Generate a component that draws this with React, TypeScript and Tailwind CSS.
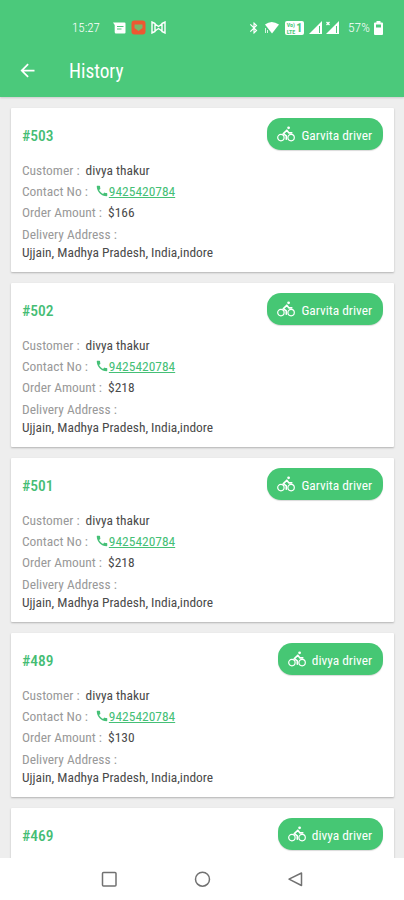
import React from 'react';
import { MdArrowBack, MdBluetooth, MdCall } from 'react-icons/md';

interface Details {
  customer: string;
  phone: string;
  amount: string;
  address: string;
}

interface Order {
  id: number;
  driver: string;
  details?: Details;
}

const base = {
  customer: 'divya thakur',
  phone: '9425420784',
  address: 'Ujjain, Madhya Pradesh, India,indore',
};

const orders: Order[] = [
  { id: 503, driver: 'Garvita driver', details: { ...base, amount: '$166' } },
  { id: 502, driver: 'Garvita driver', details: { ...base, amount: '$218' } },
  { id: 501, driver: 'Garvita driver', details: { ...base, amount: '$218' } },
  { id: 489, driver: 'divya driver', details: { ...base, amount: '$130' } },
  { id: 469, driver: 'divya driver' },
];

export default function App() {
  return (
    <div className="flex h-[900px] w-[404px] flex-col overflow-hidden bg-[#eeeeee] font-['Roboto',sans-serif] [font-stretch:75%]">
      <header className="z-10 h-[97px] shrink-0 bg-[#4bc97b] text-white shadow-[0_1px_2px_rgba(0,0,0,0.15)]">
        <StatusBar />
        <div className="flex h-[50px] items-center pl-[17px]">
          <MdArrowBack size={21} />
          <h1 className="ml-[31px] pt-[3px] text-[19.3px] font-normal leading-6">History</h1>
        </div>
      </header>
      <main className="flex min-h-0 flex-1 flex-col gap-[11px] overflow-hidden px-[11px] pt-[11px]">
        {orders.map((o) => (
          <OrderCard key={o.id} order={o} />
        ))}
      </main>
      <NavBar />
    </div>
  );
}

function OrderCard({ order }: { order: Order }) {
  const { details } = order;
  return (
    <article className="h-[164px] w-[383px] shrink-0 rounded-[1px] bg-white px-[11px] pt-[10px] text-[13.45px] leading-[21.4px] shadow-[0_1px_2px_rgba(0,0,0,0.25)]">
      <div className="flex h-8 items-center justify-between">
        <h2 className="pt-[5px] text-[15.5px] font-medium text-[#45bd74]">#{order.id}</h2>
        <div className="flex h-8 items-center gap-[6px] rounded-[14px] bg-[#46c774] pl-[10px] pr-[11px] text-[13.4px] text-white shadow-[0_1px_1px_rgba(0,0,0,0.15)]">
          <BikeIcon />
          <span className="pt-[3px]">{order.driver}</span>
        </div>
      </div>
      {details && (
        <div className="mt-[9.5px] flex flex-col text-[#4a4a4a]">
          <Row label="Customer :">{details.customer}</Row>
          <Row label="Contact No :">
            <span className="ml-px flex items-center text-[#45c076]">
              <MdCall size={14} className="-mt-0.5" />
              <span className="underline">{details.phone}</span>
            </span>
          </Row>
          <Row label="Order Amount :">{details.amount}</Row>
          <Row label="Delivery Address :" />
          <p className="-mt-[3px]">{details.address}</p>
        </div>
      )}
    </article>
  );
}

function Row({ label, children }: { label: string; children?: React.ReactNode }) {
  return (
    <div className="flex gap-[6px] whitespace-nowrap">
      <span className="text-[#999999]">{label}</span>
      {children}
    </div>
  );
}

function BikeIcon() {
  return (
    <svg width="18" height="16" viewBox="0 0 18 16" fill="none" stroke="currentColor" strokeLinecap="round" strokeLinejoin="round">
      <circle cx="3.900" cy="11.600" r="3.200" strokeWidth="1.200" />
      <circle cx="14.100" cy="11.600" r="3.200" strokeWidth="1.200" />
      <circle cx="11.600" cy="1.800" r="1.400" fill="currentColor" stroke="none" />
      <path d="M9.800 4.300L6.300 7.600 9.300 9.800v3.400M9.800 4.300l2.200 2.600h2.800" strokeWidth="1.600" />
    </svg>
  );
}

function StatusBar() {
  return (
    <div className="flex h-[45px] items-center pl-[72px] pr-[20px] pt-[10px] text-[13px] font-light">
      <span className="w-[29px]">15:27</span>
      {/* notification icons */}
      <svg className="ml-[12px]" width="13" height="12" viewBox="0 0 13 12">
        <path d="M0 .5h11.500q1 0 1 1v9q0 1-1 1H3q-1.300 0-1.300-1.500V3z" fill="currentColor" />
        <path d="M4 4.500h6.500M4 7h4.500" stroke="#4bc97b" />
      </svg>
      <svg className="ml-[5px]" width="15" height="15" viewBox="0 0 15 15">
        <rect x=".5" y=".5" width="14" height="14" rx="3" fill="#ed5831" />
        <path d="M3.500 4.500h8v3.500L7.500 11 3.500 8z" fill="#76b96a" />
      </svg>
      <svg className="ml-[5px]" width="15" height="13" viewBox="0 0 15 13" fill="none" stroke="currentColor" strokeWidth="1.400">
        <path d="M1 1v11l3-1.500V2.500zM14 1v11l-3-1.500V2.500zM4 3l3.500 2.500L11 3M4 10l3.500-2.500L11 10" />
      </svg>
      <span className="flex-1" />
      <MdBluetooth size={14} />
      <svg className="ml-[3px]" width="15" height="13" viewBox="0 0 15 13">
        <path d="M1 3.500Q7.500-1.500 15 3.500L8 12.500z" fill="currentColor" />
        <path d="M1.500 7v5M3.500 9v3" stroke="currentColor" strokeWidth=".8" />
      </svg>
      <span className="ml-[6px] flex h-[14px] w-[19px] flex-row items-center justify-center rounded-[2px] bg-white text-[#4bc97b]">
        <span className="flex flex-col text-[6px] font-bold leading-[7px]">
          <span>Vo)</span>
          <span>LTE</span>
        </span>
        <span className="ml-px text-[12px] font-bold leading-none">1</span>
      </span>
      <Signal className="ml-[5px]" />
      <Signal className="ml-[4px]" roaming />
      <span className="ml-[9px] w-[25px] text-[13.5px]">57%</span>
      <svg className="ml-px" width="9" height="14" viewBox="0 0 9 14">
        <path d="M2.500 0h4v1.500H8q1 0 1 1V13q0 1-1 1H1q-1 0-1-1V2.500q0-1 1-1h1.500z" fill="currentColor" />
        <path d="M2 3.500h5v3H2z" fill="#4bc97b" />
      </svg>
      <span className="w-px" />
    </div>
  );
}

function Signal({ className, roaming }: { className?: string; roaming?: boolean }) {
  return (
    <svg className={className} width="13" height="13" viewBox="0 0 13 13">
      <path d="M13 0v13H0z" fill="currentColor" />
      <path d="M10.500 5v7" stroke="#4bc97b" />
      {roaming && <path d="M.500 1l3 3M3.500 1l-3 3" stroke="currentColor" strokeWidth="1.300" />}
    </svg>
  );
}

function NavBar() {
  return (
    <nav className="flex h-[42px] shrink-0 items-center bg-white pl-[101px] text-[#717171]">
      <svg width="204" height="16" viewBox="0 0 204 16" fill="none" stroke="currentColor" strokeWidth="1.500">
        <rect x="1.500" y="1.500" width="13.500" height="13.500" rx="1" />
        <circle cx="101.500" cy="8.200" r="7" />
        <path d="M200.500 2v12.500L188 8.200z" strokeLinejoin="round" />
      </svg>
    </nav>
  );
}
